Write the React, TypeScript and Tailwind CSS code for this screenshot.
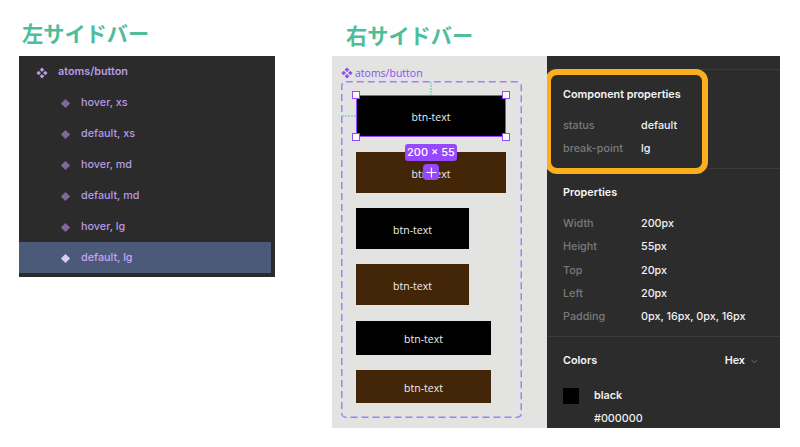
import React from "react";

const Diamond = ({ className }: { className: string }) => (
  <svg viewBox="0 0 10 10" className={className}>
    <path d="M5 .8 9.2 5 5 9.2 .8 5Z" fill="currentColor" />
  </svg>
);

const Components = ({ className }: { className: string }) => (
  <svg viewBox="0 0 12 12" className={className}>
    <path d="M6 .4 8.3 2.7 6 5 3.7 2.7ZM6 7 8.3 9.3 6 11.6 3.7 9.3ZM2.7 3.7 5 6 2.7 8.3 .4 6ZM9.3 3.7 11.6 6 9.3 8.3 7 6Z" fill="currentColor" />
  </svg>
);

const layers = ["hover, xs", "default, xs", "hover, md", "default, md", "hover, lg", "default, lg"];

const Btn = ({ w, h, brown, mb }: { w: string; h: string; brown?: boolean; mb: string }) => (
  <div className={`${w} ${h} ${mb} ${brown ? "bg-[#432508]" : "bg-black"} flex items-center justify-center pt-[4px] text-[10.5px] text-[#efefef] font-['Open_Sans',sans-serif]`}>
    btn-text
  </div>
);

const Row = ({ k, v }: { k: string; v: string }) => (
  <div className="flex h-[23.2px] items-center text-[10.8px] leading-none font-medium">
    <span className="w-[78px] text-[#7a7a7a]">{k}</span>
    <span className="text-[#f2f2f2]">{v}</span>
  </div>
);

const Handle = ({ className }: { className: string }) => (
  <span className={`absolute h-[8px] w-[8px] border-[1.5px] border-[#9747ff] bg-white ${className}`} />
);

export default function App() {
  const head = "text-[21.2px] leading-[28px] font-bold text-[#4dbd9a] font-['Noto_Sans_CJK_JP',sans-serif]";
  return (
    <div className="flex h-[447px] w-[800px] bg-white font-['Inter',sans-serif]">
      <div className="ml-[19px] w-[256px] pt-[19px]">
        <div className={`${head} ml-[3px] h-[37px]`}>左サイドバー</div>
        <div className="h-[221px] bg-[#2b2b2b] pr-[4px] pb-[4px] text-[10.8px] font-medium text-[#b79ae2]">
          <div className="flex h-[31px] items-center gap-[10px] pt-[2px] pl-[17px] font-semibold">
            <Components className="h-[12px] w-[12px] text-[#b79ae2]" />
            atoms/button
          </div>
          {layers.map((l) => {
            const sel = l === "default, lg";
            return (
              <div key={l} className={`flex h-[31px] items-center gap-[10px] pt-[2px] pl-[41px] ${sel ? "bg-[#4b5a78] text-[#c7a4ee]" : ""}`}>
                <Diamond className={`h-[11px] w-[11px] ${sel ? "text-[#dcc8fa]" : "text-[#7f689e]"}`} />
                {l}
              </div>
            );
          })}
        </div>
      </div>

      <div className="ml-[57px] w-[448px] pt-[19px]">
        <div className={`${head} ml-[14px] h-[37px] translate-y-[2px]`}>右サイドバー</div>
        <div className="flex h-[372px]">
          <div className="relative w-[215px] bg-[#e3e3e2] pt-[9px] pl-[9px]">
            <div className="flex h-[16px] items-center gap-[2px] text-[10.5px] leading-none font-medium text-[#8a4ff0] font-['Open_Sans',sans-serif]">
              <Components className="h-[12px] w-[12px] text-[#8a4ff0]" />
              atoms/button
            </div>
            <div className="relative h-[337px] w-[181px] pt-[14px] pl-[15px]">
              <svg className="absolute inset-0 h-full w-full" viewBox="0 0 181 337">
                <rect x="0.75" y="0.75" width="179.5" height="335.5" rx="4" fill="none" stroke="#a97cff" strokeWidth="1.5" strokeDasharray="7 4" />
                <path d="M90 1V14M1 35H15" fill="none" stroke="#5cc9b0" strokeWidth="1" strokeDasharray="2 1" />
              </svg>
              <div className="relative w-[150px]">
                <Btn w="w-[150px]" h="h-[42px]" mb="mb-[15px]" />
                <div className="pointer-events-none absolute top-0 left-0 h-[42px] w-[150px] border border-[#9747ff]">
                  <Handle className="-top-[5px] -left-[5px]" />
                  <Handle className="-top-[5px] -right-[5px]" />
                  <Handle className="-bottom-[5px] -left-[5px]" />
                  <Handle className="-bottom-[5px] -right-[5px]" />
                </div>
              </div>
              <div className="relative w-[150px]">
                <Btn w="w-[150px]" h="h-[41px]" mb="mb-[15px]" brown />
                <span className="absolute -top-[8px] left-[49px] flex h-[17px] w-[52px] items-center justify-center rounded-[3px] bg-[#9747ff] text-[11px] leading-none font-medium text-white">
                  200 × 55
                </span>
                <span className="absolute top-[12px] left-[67px] flex h-[16px] w-[16px] items-center justify-center rounded-[4px] bg-[#9747ff]">
                  <svg viewBox="0 0 12 12" className="h-[11px] w-[11px]">
                    <path d="M6 .5v11M.5 6h11" stroke="#fff" strokeWidth="1.3" fill="none" />
                  </svg>
                </span>
              </div>
              <Btn w="w-[113px]" h="h-[41px]" mb="mb-[15px]" />
              <Btn w="w-[113px]" h="h-[41px]" mb="mb-[16px]" brown />
              <Btn w="w-[135px]" h="h-[34px]" mb="mb-[15px]" />
              <Btn w="w-[135px]" h="h-[33px]" mb="mb-0" brown />
            </div>
          </div>

          <div className="w-[233px] overflow-hidden bg-[#2c2c2c]">
            <div className="h-[14px] border-b border-[#3a3a3a]" />
            <section className="relative h-[99px] border-b border-[#3a3a3a] pt-[15px] pl-[16px]">
              <h3 className="mb-[10px] h-[20px] text-[10.8px] leading-[20px] font-semibold text-[#f5f5f5]">Component properties</h3>
              <Row k="status" v="default" />
              <Row k="break-point" v="lg" />
              <span className="absolute -top-[1px] -left-[2px] h-[105px] w-[163px] rounded-[12px] border-[6px] border-[#fbae1e]" />
            </section>
            <section className="h-[168px] border-b border-[#3a3a3a] pt-[14px] pl-[16px]">
              <h3 className="mb-[10px] h-[20px] text-[10.8px] leading-[20px] font-semibold text-[#f5f5f5]">Properties</h3>
              <Row k="Width" v="200px" />
              <Row k="Height" v="55px" />
              <Row k="Top" v="20px" />
              <Row k="Left" v="20px" />
              <Row k="Padding" v="0px, 16px, 0px, 16px" />
            </section>
            <section className="pt-[14px] pl-[16px]">
              <div className="mb-[17px] flex h-[20px] items-center pr-[22px] text-[10.8px] font-semibold text-[#f5f5f5]">
                <span className="flex-1">Colors</span>
                <span>Hex</span>
                <svg viewBox="0 0 8 8" className="ml-[6px] h-[7px] w-[7px]">
                  <path d="M1 2.5 4 5.5 7 2.5" stroke="#777" fill="none" />
                </svg>
              </div>
              <div className="flex h-[16px] items-center text-[10.8px] font-semibold text-[#f0f0f0]">
                <span className="mr-[15px] h-[16px] w-[16px] bg-black" />
                black
              </div>
              <div className="mt-[7px] pl-[31px] text-[10.8px] leading-[16px] font-medium text-[#f0f0f0]">#000000</div>
            </section>
          </div>
        </div>
      </div>
    </div>
  );
}
